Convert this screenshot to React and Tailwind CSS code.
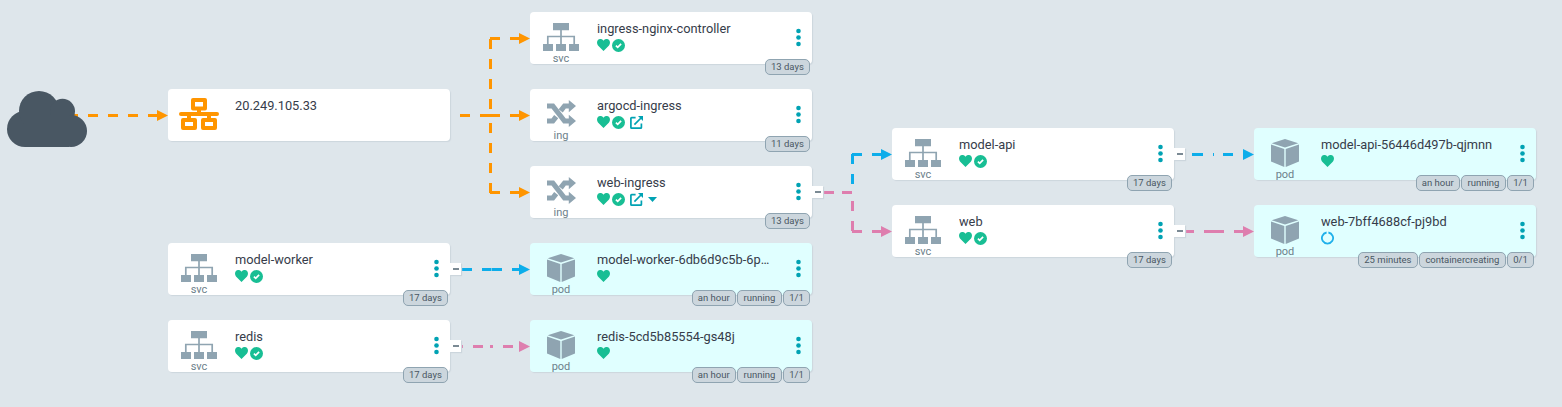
import React from 'react';

const ORANGE = '#ff9500';
const BLUE = '#0dadea';
const PINK = '#de7eae';

// [x, y, width, height] of every dash, grouped by colour
const dashes = [
  { color: ORANGE, rects: [
    [74, 114, 4, 3], [88, 114, 10, 3], [108, 114, 10, 3], [128, 114, 10, 3], [148, 114, 10, 3],
    [460, 114, 10, 3], [480, 114, 20, 3], [510, 114, 10, 3],
    [489, 39, 3, 10], [490, 37, 10, 3], [510, 37, 10, 3],
    [489, 59, 3, 10], [489, 79, 3, 10], [489, 99, 3, 10],
    [489, 123, 3, 10], [489, 143, 3, 10], [489, 163, 3, 10], [489, 183, 3, 10],
    [490, 191, 10, 3], [510, 191, 10, 3],
  ] },
  { color: PINK, rects: [
    [824, 191, 10, 3], [842, 191, 10, 3], [851, 201, 3, 10], [851, 221, 3, 10],
    [852, 230, 10, 3], [872, 230, 10, 3],
    [1186, 230, 8, 3], [1204, 230, 20, 3], [1234, 230, 10, 3],
    [462, 345, 1, 3], [473, 345, 10, 3], [490, 345, 3, 3], [503, 345, 10, 3],
  ] },
  { color: BLUE, rects: [
    [851, 154, 3, 10], [852, 153, 10, 3], [851, 174, 3, 10], [872, 153, 10, 3],
    [1192, 153, 11, 3], [1213, 153, 1, 3], [1223, 153, 10, 3],
    [462, 268, 10, 3], [482, 268, 9.5, 3], [492, 268, 10, 3], [512, 268, 8, 3],
  ] },
];

const arrows = [
  [168, 115.5, ORANGE], [530, 38.5, ORANGE], [530, 115.5, ORANGE], [530, 192.5, ORANGE],
  [892, 154.5, BLUE], [892, 231.5, PINK], [1254, 154.5, BLUE], [1254, 231.5, PINK],
  [530, 269.5, BLUE], [530, 346.5, PINK],
];

function Edges() {
  return (
    <svg className="absolute inset-0" width="1562" height="407">
      {dashes.map((g) => g.rects.map(([x, y, w, h]) => (
        <rect key={`${x}-${y}-${w}`} x={x} y={y} width={w} height={h} fill={g.color} />
      )))}
      {arrows.map(([x, y, c]) => (
        <path key={`${x}-${y}`} d={`M${x - 11} ${y - 5.5}L${x} ${y}L${x - 11} ${y + 5.5}Z`} fill={c} />
      ))}
    </svg>
  );
}

const Heart = () => (
  <svg width="13" height="12" viewBox="0 0 13 11" preserveAspectRatio="none" fill="#18be94">
    <path d="M6.500 11L1 5.900C-.3 4.500-.3 2.200.9 1 2.300-.4 4.700-.3 5.900 1l.6.7.6-.7C8.300-.3 10.700-.4 12.100 1c1.200 1.200 1.200 3.500-.1 4.900z" />
  </svg>
);

const Check = () => (
  <svg width="13" height="13" viewBox="0 0 13 13">
    <circle cx="6.5" cy="6.5" r="6.5" fill="#18be94" />
    <path d="M3.9 6.600l1.800 1.700 3.400-3.500" fill="none" stroke="#fff" strokeWidth="1.700" />
  </svg>
);

const External = () => (
  <svg width="13" height="13" viewBox="0 0 13 13" fill="none" stroke="#00a2b3" strokeWidth="1.7">
    <path d="M5.6 1.6H1.6a.7.7 0 0 0-.7.7v9.1c0 .4.3.7.7.7h9.1c.4 0 .7-.3.7-.7V7.4M4.4 8.6l6.6-6.6" />
    <path d="M8 0h5v5z" fill="#00a2b3" stroke="none" />
  </svg>
);

const Spinner = () => (
  <svg width="13" height="14" viewBox="0 0 13 14" fill="none" stroke="#1fb0ea" strokeWidth="1.800">
    <path d="M7.400 1.500a5.600 5.600 0 1 1-1.800 0" />
  </svg>
);

const LoadBalancer = () => (
  <svg width="40" height="32" viewBox="0 0 40 32" fill="none" stroke={ORANGE} strokeWidth="4" strokeLinejoin="round">
    <rect x="14" y="2" width="12" height="8.500" />
    <path d="M20 11v5M10 16v6M30 16v6" />
    <path d="M2 16h36" strokeLinecap="round" />
    <rect x="4" y="22" width="12" height="8" />
    <rect x="24" y="22" width="12" height="8" />
  </svg>
);

const Sitemap = () => (
  <svg width="36" height="28" viewBox="0 0 36 28" fill="#8fa4b1">
    <path d="M10 0h16v7.300H10zM0 21h10v7H0zM13 21h10v7H13zM26 21h10v7H26z" />
    <path d="M18 7v14M4.800 21v-7.500h26.400V21" fill="none" stroke="#8fa4b1" strokeWidth="1.700" />
  </svg>
);

const Shuffle = () => (
  <svg width="29" height="27" viewBox="0 0 29 27" fill="none" stroke="#8fa4b1" strokeWidth="5.200">
    <path d="M0 6h5.800L17.500 21H23M0 21h5.800l3.400-4.300M13.700 10.800L17.500 6H23" />
    <path d="M21.800 0v12.300L29 6.100zM21.800 14.800V27l7.200-6.100z" fill="#8fa4b1" stroke="none" />
  </svg>
);

const Cube = () => (
  <svg width="28" height="28" viewBox="0 0 28 28" fill="#8fa4b1">
    <path d="M14 0l13.300 4.200L14 8.600.7 4.200zM0 5.600l13.300 4.300V28L0 22.500zM28 5.600L14.700 9.900V28L28 22.500z" />
  </svg>
);

const kindIcons = { svc: Sitemap, ing: Shuffle, pod: Cube };

function Node({ x, y, name, kind, tags = [], icons = ['heart', 'check'], toggle }) {
  const pod = kind === 'pod';
  const KindIcon = kindIcons[kind];
  return (
    <div
      className={`absolute flex h-[52px] w-[282px] rounded-[4px] shadow-[1px_1px_1px_#ccd6dd] ${pod ? 'bg-[#e0ffff]' : 'bg-white'}`}
      style={{ left: x, top: y }}
    >
      <div className="flex w-[62px] shrink-0 flex-col items-center">
        {kind === 'lb' ? (
          <div className="pt-[9px]"><LoadBalancer /></div>
        ) : (
          <>
            <div className="flex h-[41px] shrink-0 items-start pt-[11px]"><KindIcon /></div>
            <span className="text-[11px] leading-[12px] text-[#6d7f8b]">{kind}</span>
          </>
        )}
      </div>
      <div className="ml-[5px] flex w-[180px] flex-col pt-[8px]">
        <div className="truncate text-[12.8px] leading-[18px] text-[#363c4a]">{name}</div>
        {kind !== 'lb' && (
          <div className="flex h-[14px] items-center gap-[2px]">
            {icons.includes('heart') && <Heart />}
            {icons.includes('check') && <Check />}
            {icons.includes('link') && <span className="ml-[3px]"><External /></span>}
            {icons.includes('caret') && (
              <svg className="ml-[3px] mt-[1px]" width="9" height="5" viewBox="0 0 9 5"><path d="M0 0h9L4.500 5z" fill="#00a2b3" /></svg>
            )}
            {icons.includes('spinner') && <Spinner />}
          </div>
        )}
      </div>
      {kind !== 'lb' && (
        <svg className="ml-[19px] mt-[16px]" width="5" height="19" viewBox="0 0 5 19" fill="#00a2b3">
          <circle cx="2.500" cy="3" r="2.300" /><circle cx="2.500" cy="9.500" r="2.300" /><circle cx="2.500" cy="16" r="2.300" />
        </svg>
      )}
      <div className="absolute right-[2px] top-[47px] flex gap-[1.5px]">
        {tags.map((t) => (
          <span key={t} className="h-[16px] whitespace-nowrap rounded-[5px] border border-[#8fa4b1] bg-[#ccd6dd] px-[5.2px] text-[9.5px] leading-[14px] text-[#495763]">{t}</span>
        ))}
      </div>
      {toggle && (
        <div className="absolute left-[282px] top-[20px] flex h-[12px] w-[11px] items-start bg-white pl-[3px] pt-[5px] shadow-[1px_1px_1px_#ccd6dd]">
          <div className="h-[2px] w-[6px] bg-[#7b8a94]" />
        </div>
      )}
    </div>
  );
}

const nodes = [
  { x: 168, y: 89, name: '20.249.105.33', kind: 'lb' },
  { x: 530, y: 12, name: 'ingress-nginx-controller', kind: 'svc', tags: ['13 days'] },
  { x: 530, y: 89, name: 'argocd-ingress', kind: 'ing', tags: ['11 days'], icons: ['heart', 'check', 'link'] },
  { x: 530, y: 166, name: 'web-ingress', kind: 'ing', tags: ['13 days'], icons: ['heart', 'check', 'link', 'caret'], toggle: true },
  { x: 892, y: 128, name: 'model-api', kind: 'svc', tags: ['17 days'], toggle: true },
  { x: 892, y: 205, name: 'web', kind: 'svc', tags: ['17 days'], toggle: true },
  { x: 1254, y: 128, name: 'model-api-56446d497b-qjmnn', kind: 'pod', tags: ['an hour', 'running', '1/1'], icons: ['heart'] },
  { x: 1254, y: 205, name: 'web-7bff4688cf-pj9bd', kind: 'pod', tags: ['25 minutes', 'containercreating', '0/1'], icons: ['spinner'] },
  { x: 168, y: 243, name: 'model-worker', kind: 'svc', tags: ['17 days'], toggle: true },
  { x: 168, y: 320, name: 'redis', kind: 'svc', tags: ['17 days'], toggle: true },
  { x: 530, y: 243, name: 'model-worker-6db6d9c5b-6p…', kind: 'pod', tags: ['an hour', 'running', '1/1'], icons: ['heart'] },
  { x: 530, y: 320, name: 'redis-5cd5b85554-gs48j', kind: 'pod', tags: ['an hour', 'running', '1/1'], icons: ['heart'] },
];

export default function App() {
  return (
    <div className="relative h-[407px] w-[1562px] overflow-hidden bg-[#dee6eb] font-['Roboto',sans-serif]">
      <Edges />
      <svg className="absolute left-[7px] top-[91px]" width="80" height="56" viewBox="0 0 80 56" fill="#495763">
        <circle cx="18" cy="38" r="18" />
        <circle cx="32" cy="20" r="20" />
        <circle cx="55.500" cy="20.300" r="12.500" />
        <circle cx="64" cy="40" r="16" />
        <path d="M18 24h44v32H18z" />
      </svg>
      {nodes.map((n) => <Node key={n.name} {...n} />)}
    </div>
  );
}
